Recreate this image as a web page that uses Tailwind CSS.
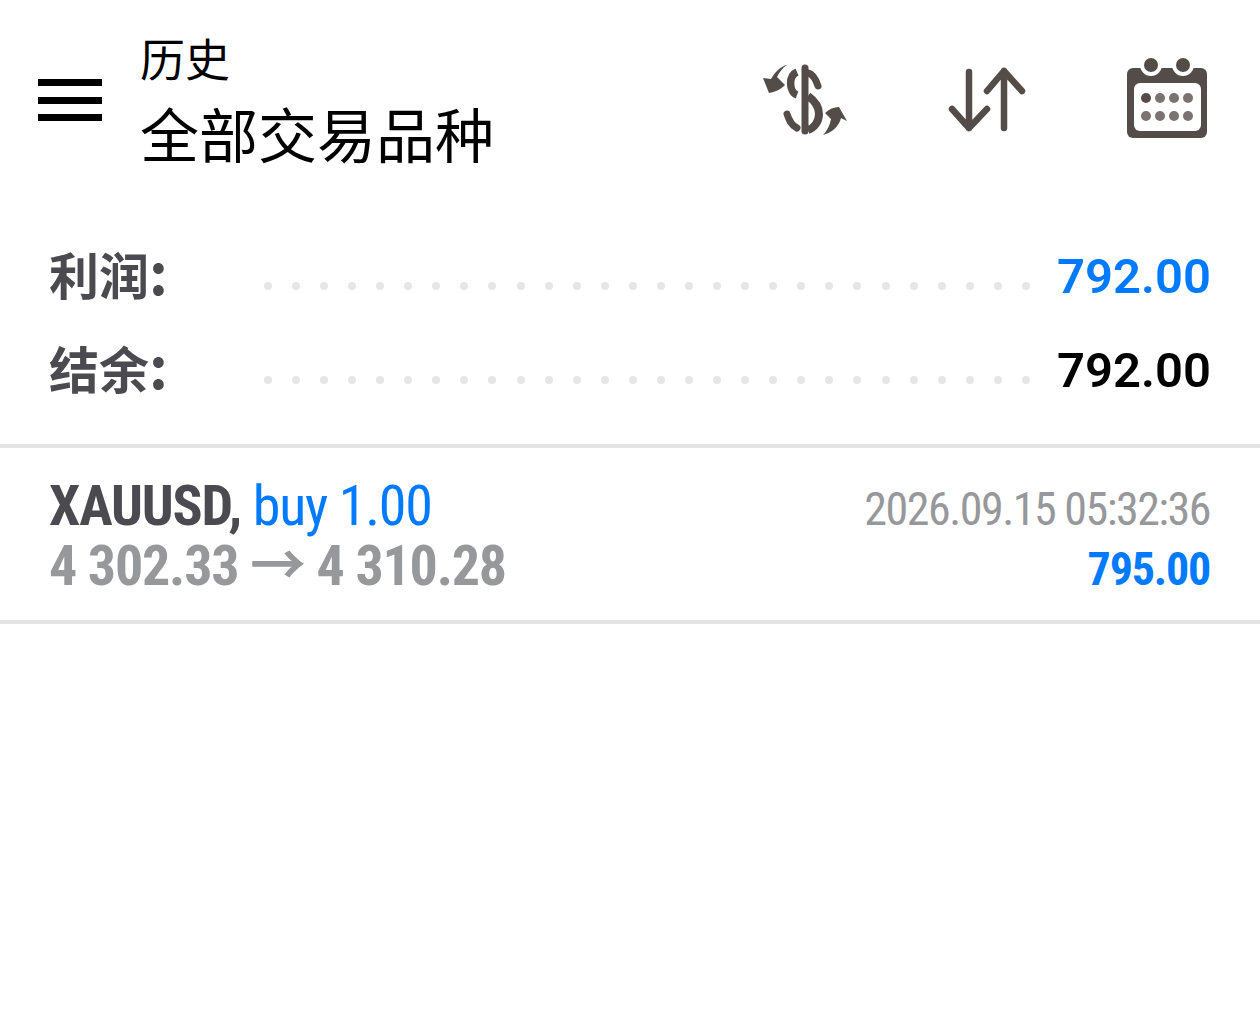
<!DOCTYPE html>
<html lang="zh"><head><meta charset="utf-8">
<script src="https://cdn.jsdelivr.net/npm/@tailwindcss/browser@4"></script>
</head>
<body class="bg-white font-['Roboto','Noto_Sans_CJK_SC',sans-serif]">
<div class="w-[1260px] h-[1026px] bg-white overflow-hidden flex flex-col">
  <header class="h-[200px] flex items-center pl-[38px] pr-[52px]">
    <div class="w-[64px] flex flex-col gap-[10.5px] shrink-0"><span class="block h-[7px] bg-black"></span><span class="block h-[7px] bg-black"></span><span class="block h-[7px] bg-black"></span></div>
    <div class="ml-[38px] flex flex-col grow">
      <div class="text-[45px] leading-[62px] text-black font-['Noto_Sans_CJK_SC',sans-serif] font-normal mt-[-1px]">历史</div>
      <div class="text-[59px] leading-[80px] text-black font-['Noto_Sans_CJK_SC',sans-serif] font-normal mt-[4px]">全部交易品种</div>
    </div>
    <svg class="shrink-0" width="90" height="80" viewBox="760 60 90 80" fill="none">
      <g stroke="#544c49" stroke-linecap="round" fill="none">
        <path d="M805 68V131" stroke-width="7"/>
        <path d="M797 72C788 76 789 92 797 95" stroke-width="7.5" stroke-linecap="butt"/>
        <path d="M808 73C813 74 816 80 818 86" stroke-width="7"/>
        <path d="M808 96C815 101 819 107 819 114C819 122 814 128 808 130" stroke-width="8" stroke-linecap="butt"/>
        <path d="M787 114C789 120 791 125 797 128" stroke-width="7"/>
      </g>
      <path fill="#544c49" d="M787 65C782 68 779 73 777 77L785 85C780 90 775 92 769 93L763 78L771 79C775 72 781 66 787 65Z"/>
      <path fill="#544c49" d="M847 121L839 107C834 107 829 109 825 113L831 119C830 125 827 131 823 135C833 132 839 126 841 118Z"/>
    </svg>
    <svg class="shrink-0 ml-[98px]" width="80" height="68" viewBox="948 66 80 68" fill="none" stroke="#544c49" stroke-width="6.5" stroke-linecap="round" stroke-linejoin="round">
      <path d="M969 72V128M952 109L969 128L987 109"/>
      <path d="M1004 128V71M987 91L1004 71L1022 91"/>
    </svg>
    <svg class="shrink-0 ml-[98px] mt-[-4px]" width="82" height="84" viewBox="1126 56 82 84">
      <rect x="1127" y="68" width="80" height="70" rx="6" fill="#544c49"/>
      <circle cx="1151" cy="65" r="11" fill="#fff"/><circle cx="1183" cy="65" r="11" fill="#fff"/>
      <rect x="1140" y="56" width="22" height="12" fill="#fff"/><rect x="1172" y="56" width="22" height="12" fill="#fff"/>
      <circle cx="1151" cy="65" r="7" fill="#544c49"/><circle cx="1183" cy="65" r="7" fill="#544c49"/>
      <rect x="1134" y="83" width="67" height="48" rx="6" fill="#fff"/>
      <g fill="#7a7371"><circle cx="1146" cy="98" r="5" fill="#544c49"/><circle cx="1160" cy="98" r="5"/><circle cx="1174" cy="98" r="5"/><circle cx="1188" cy="98" r="5"/><circle cx="1146" cy="116" r="5"/><circle cx="1160" cy="116" r="5"/><circle cx="1174" cy="116" r="5"/><circle cx="1188" cy="116" r="5"/></g>
    </svg>
  </header>
  <section class="pl-[49px] pr-[49px] pt-[30px] h-[244px]">
    <div class="h-[94px] flex items-center">
      <div class="w-[215px] text-[50px] leading-[94px] font-bold text-[#4a4a50] font-['Noto_Sans_CJK_SC',sans-serif] mt-[-9px] whitespace-nowrap">利润<span class="text-[58px] leading-[58px]">:</span></div>
      <div class="w-[794px] flex justify-between pr-[27px] mt-[18px]">
        <i class="size-2 rounded-full bg-[#e6e6e6]"></i><i class="size-2 rounded-full bg-[#e6e6e6]"></i><i class="size-2 rounded-full bg-[#e6e6e6]"></i><i class="size-2 rounded-full bg-[#e6e6e6]"></i><i class="size-2 rounded-full bg-[#e6e6e6]"></i><i class="size-2 rounded-full bg-[#e6e6e6]"></i><i class="size-2 rounded-full bg-[#e6e6e6]"></i><i class="size-2 rounded-full bg-[#e6e6e6]"></i><i class="size-2 rounded-full bg-[#e6e6e6]"></i><i class="size-2 rounded-full bg-[#e6e6e6]"></i><i class="size-2 rounded-full bg-[#e6e6e6]"></i><i class="size-2 rounded-full bg-[#e6e6e6]"></i><i class="size-2 rounded-full bg-[#e6e6e6]"></i><i class="size-2 rounded-full bg-[#e6e6e6]"></i><i class="size-2 rounded-full bg-[#e6e6e6]"></i><i class="size-2 rounded-full bg-[#e6e6e6]"></i><i class="size-2 rounded-full bg-[#e6e6e6]"></i><i class="size-2 rounded-full bg-[#e6e6e6]"></i><i class="size-2 rounded-full bg-[#e6e6e6]"></i><i class="size-2 rounded-full bg-[#e6e6e6]"></i><i class="size-2 rounded-full bg-[#e6e6e6]"></i><i class="size-2 rounded-full bg-[#e6e6e6]"></i><i class="size-2 rounded-full bg-[#e6e6e6]"></i><i class="size-2 rounded-full bg-[#e6e6e6]"></i><i class="size-2 rounded-full bg-[#e6e6e6]"></i><i class="size-2 rounded-full bg-[#e6e6e6]"></i><i class="size-2 rounded-full bg-[#e6e6e6]"></i><i class="size-2 rounded-full bg-[#e6e6e6]"></i>
      </div>
      <div class="ml-auto text-[49px] leading-[94px] font-semibold text-[#007aff]">792.00</div>
    </div>
    <div class="h-[94px] flex items-center">
      <div class="w-[215px] text-[50px] leading-[94px] font-bold text-[#4a4a50] font-['Noto_Sans_CJK_SC',sans-serif] mt-[-9px] whitespace-nowrap">结余<span class="text-[58px] leading-[58px]">:</span></div>
      <div class="w-[794px] flex justify-between pr-[27px] mt-[18px]">
        <i class="size-2 rounded-full bg-[#e6e6e6]"></i><i class="size-2 rounded-full bg-[#e6e6e6]"></i><i class="size-2 rounded-full bg-[#e6e6e6]"></i><i class="size-2 rounded-full bg-[#e6e6e6]"></i><i class="size-2 rounded-full bg-[#e6e6e6]"></i><i class="size-2 rounded-full bg-[#e6e6e6]"></i><i class="size-2 rounded-full bg-[#e6e6e6]"></i><i class="size-2 rounded-full bg-[#e6e6e6]"></i><i class="size-2 rounded-full bg-[#e6e6e6]"></i><i class="size-2 rounded-full bg-[#e6e6e6]"></i><i class="size-2 rounded-full bg-[#e6e6e6]"></i><i class="size-2 rounded-full bg-[#e6e6e6]"></i><i class="size-2 rounded-full bg-[#e6e6e6]"></i><i class="size-2 rounded-full bg-[#e6e6e6]"></i><i class="size-2 rounded-full bg-[#e6e6e6]"></i><i class="size-2 rounded-full bg-[#e6e6e6]"></i><i class="size-2 rounded-full bg-[#e6e6e6]"></i><i class="size-2 rounded-full bg-[#e6e6e6]"></i><i class="size-2 rounded-full bg-[#e6e6e6]"></i><i class="size-2 rounded-full bg-[#e6e6e6]"></i><i class="size-2 rounded-full bg-[#e6e6e6]"></i><i class="size-2 rounded-full bg-[#e6e6e6]"></i><i class="size-2 rounded-full bg-[#e6e6e6]"></i><i class="size-2 rounded-full bg-[#e6e6e6]"></i><i class="size-2 rounded-full bg-[#e6e6e6]"></i><i class="size-2 rounded-full bg-[#e6e6e6]"></i><i class="size-2 rounded-full bg-[#e6e6e6]"></i><i class="size-2 rounded-full bg-[#e6e6e6]"></i>
      </div>
      <div class="ml-auto text-[49px] leading-[94px] font-semibold text-black">792.00</div>
    </div>
  </section>
  <div class="border-y-4 border-[#e4e4e4] h-[180px] flex justify-between pl-[49px] pr-[50px] pt-[28px] [font-stretch:75%]">
    <div>
      <div class="text-[56px] leading-[60px] whitespace-nowrap tracking-[-1.2px]"><b class="font-bold text-[#4a4a50]">XAUUSD,</b> <span class="text-[#007aff]">buy 1.00</span></div>
      <div class="text-[56px] leading-[60px] font-bold text-[#97989b] whitespace-nowrap tracking-[-1.2px]">4 302.33 → 4 310.28</div>
    </div>
    <div class="text-right pt-[3px]">
      <div class="text-[46px] leading-[60px] text-[#97989b] whitespace-nowrap tracking-[-1.5px]">2026.09.15 05:32:36</div>
      <div class="text-[46px] leading-[60px] font-bold text-[#007aff] tracking-[-1.2px]">795.00</div>
    </div>
  </div>
</div>
</body></html>
